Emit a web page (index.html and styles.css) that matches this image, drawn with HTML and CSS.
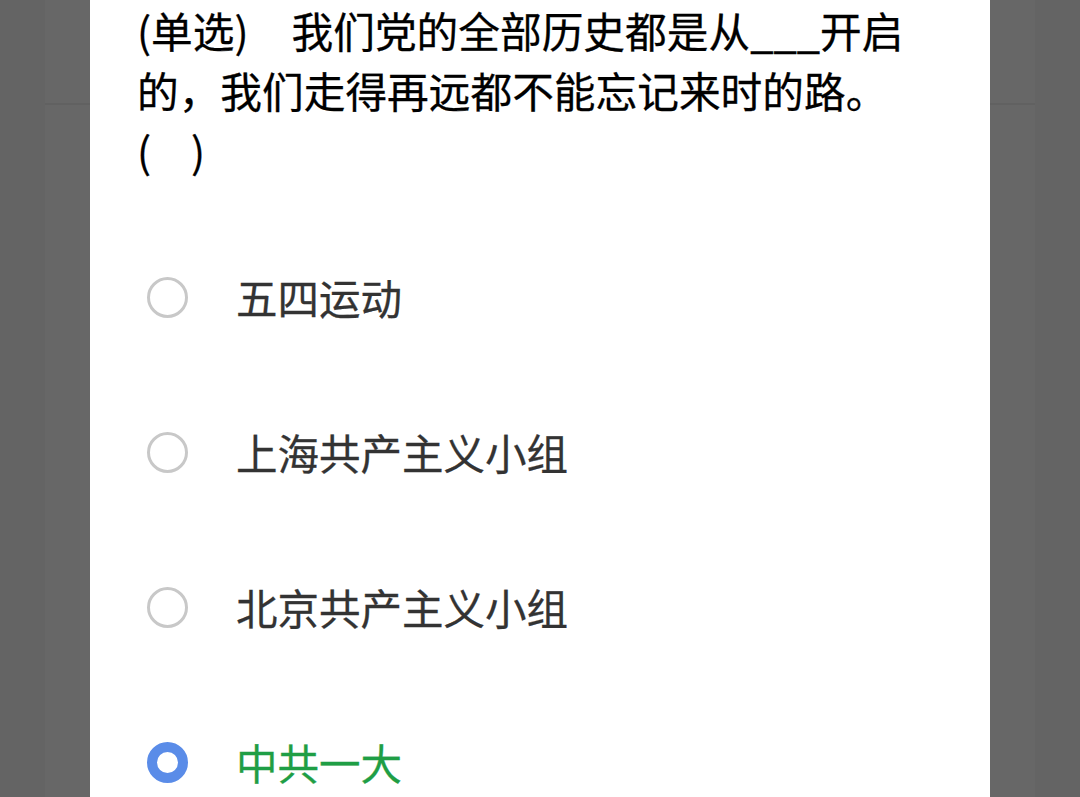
FILE: index.html
```html
<!DOCTYPE html>
<html lang="zh-CN">
<head>
<meta charset="utf-8">
<title>单选题</title>
<link rel="stylesheet" href="styles.css">
</head>
<body>
<div class="backdrop">
  <div class="side"><div class="side-head"></div></div>
  <main class="sheet">
    <p class="question">(单选)<span class="gap"></span>我们党的全部历史都是从<span class="blank">___</span>开启<br>的，我们走得再远都不能忘记来时的路。<br>(<span class="paren-gap"></span>)</p>
    <ul class="options">
      <li class="option"><span class="radio"></span><span class="label">五四运动</span></li>
      <li class="option"><span class="radio"></span><span class="label">上海共产主义小组</span></li>
      <li class="option"><span class="radio"></span><span class="label">北京共产主义小组</span></li>
      <li class="option selected"><span class="radio"></span><span class="label">中共一大</span></li>
    </ul>
  </main>
  <div class="side"><div class="side-head"></div></div>
</div>
</body>
</html>
```

FILE: styles.css
```css
html, body {
  margin: 0;
  padding: 0;
  height: 100%;
  overflow: hidden;
}
body {
  background: #646464;
  font-family: "Noto Sans CJK SC", "Noto Sans", sans-serif;
}
.backdrop {
  display: flex;
  margin: 0 45px;
  height: 797px;
  background: #676767;
}
.side {
  width: 45px;
  flex: none;
}
.side-head {
  height: 103px;
  border-bottom: 2px solid #616161;
}
.sheet {
  width: 900px;
  flex: none;
  background: #ffffff;
  box-sizing: border-box;
  padding: 0 0 0 47px;
  overflow: hidden;
}
.question {
  margin: 0;
  font-size: 41.7px;
  font-weight: 400;
  line-height: 60px;
  color: #000000;
  -webkit-text-stroke: 0.3px #000000;
}
.gap {
  display: inline-block;
  width: 43px;
}
.paren-gap {
  display: inline-block;
  width: 40px;
}
.options {
  list-style: none;
  margin: 40px 0 0 0;
  padding: 0;
}
.option {
  height: 155px;
  display: flex;
  align-items: center;
}
.radio {
  width: 41px;
  height: 41px;
  box-sizing: border-box;
  border: 3px solid #c8c8c8;
  border-radius: 50%;
  margin-left: 10px;
  flex: none;
}
.label {
  margin-left: 48px;
  font-size: 41.5px;
  font-weight: 400;
  line-height: 1;
  color: #333333;
  -webkit-text-stroke: 0.3px currentColor;
}
.selected .radio {
  border: 10.5px solid #5a8ce8;
}
.selected .label {
  color: #1f9e45;
}
```
